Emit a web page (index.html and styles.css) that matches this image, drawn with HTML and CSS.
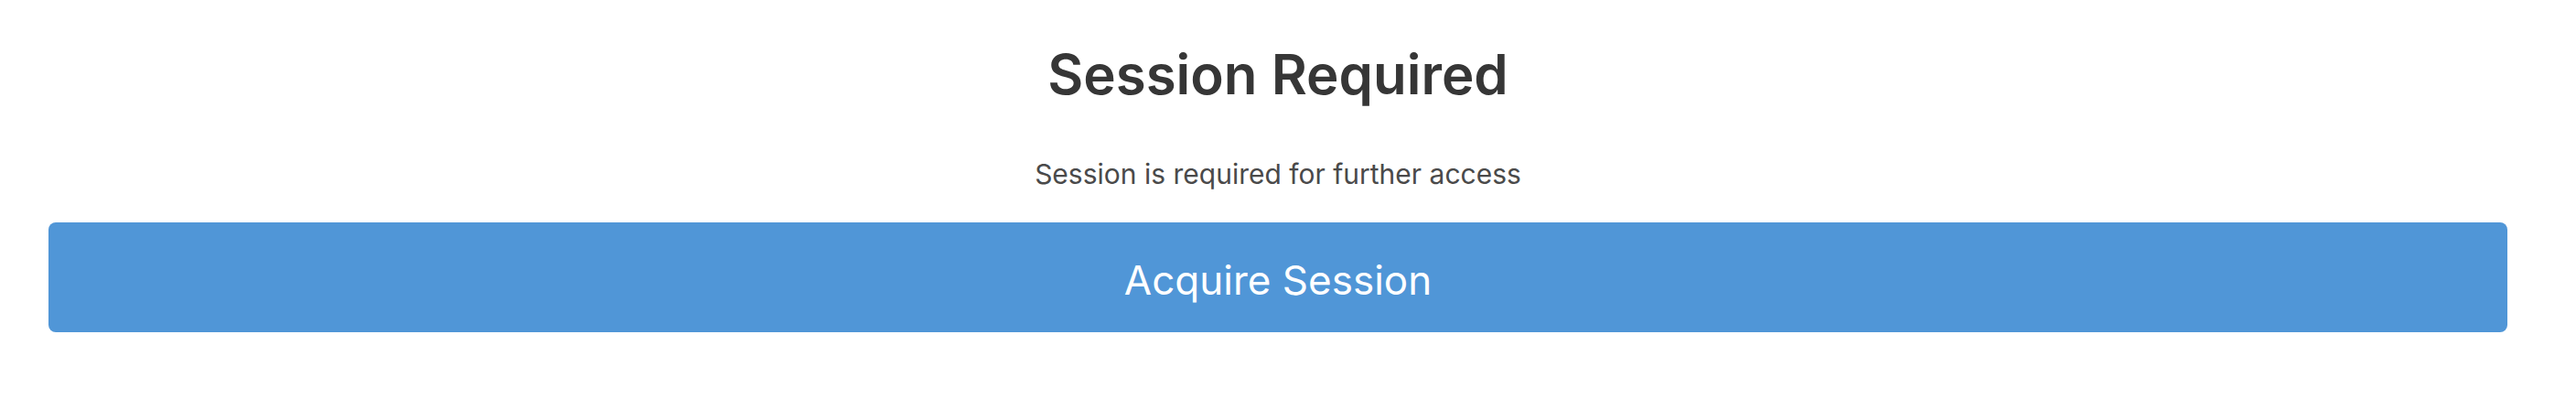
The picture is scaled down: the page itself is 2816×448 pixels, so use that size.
FILE: index.html
```html
<!DOCTYPE html>
<html lang="en">
<head>
<meta charset="utf-8">
<title>Session Required</title>
<link rel="stylesheet" href="styles.css">
</head>
<body>
<main class="page">
  <h1 class="title">Session Required</h1>
  <p class="subtitle">Session is required for further access</p>
  <button class="acquire" type="button">Acquire Session</button>
</main>
</body>
</html>
```
FILE: styles.css
```css
html, body {
  margin: 0;
  padding: 0;
  background: #ffffff;
}
.page {
  display: flex;
  flex-direction: column;
  align-items: stretch;
  padding: 45px 75px 0 53px;
  font-family: Inter, "Liberation Sans", sans-serif;
}
.title {
  margin: 0;
  text-align: center;
  font-size: 60px;
  line-height: 72px;
  font-weight: 600;
  color: #363636;
}
.subtitle {
  margin: 55px 0 0 0;
  text-align: center;
  font-size: 30px;
  line-height: 36px;
  font-weight: 400;
  color: #4a4a4a;
}
.acquire {
  margin-top: 35px;
  height: 120px;
  display: flex;
  align-items: center;
  justify-content: center;
  border: none;
  border-radius: 8px;
  background: #5096d7;
  color: #ffffff;
  font-family: Inter, "Liberation Sans", sans-serif;
  font-size: 44px;
  font-weight: 400;
  padding: 6px 0 0 0;
}
```
